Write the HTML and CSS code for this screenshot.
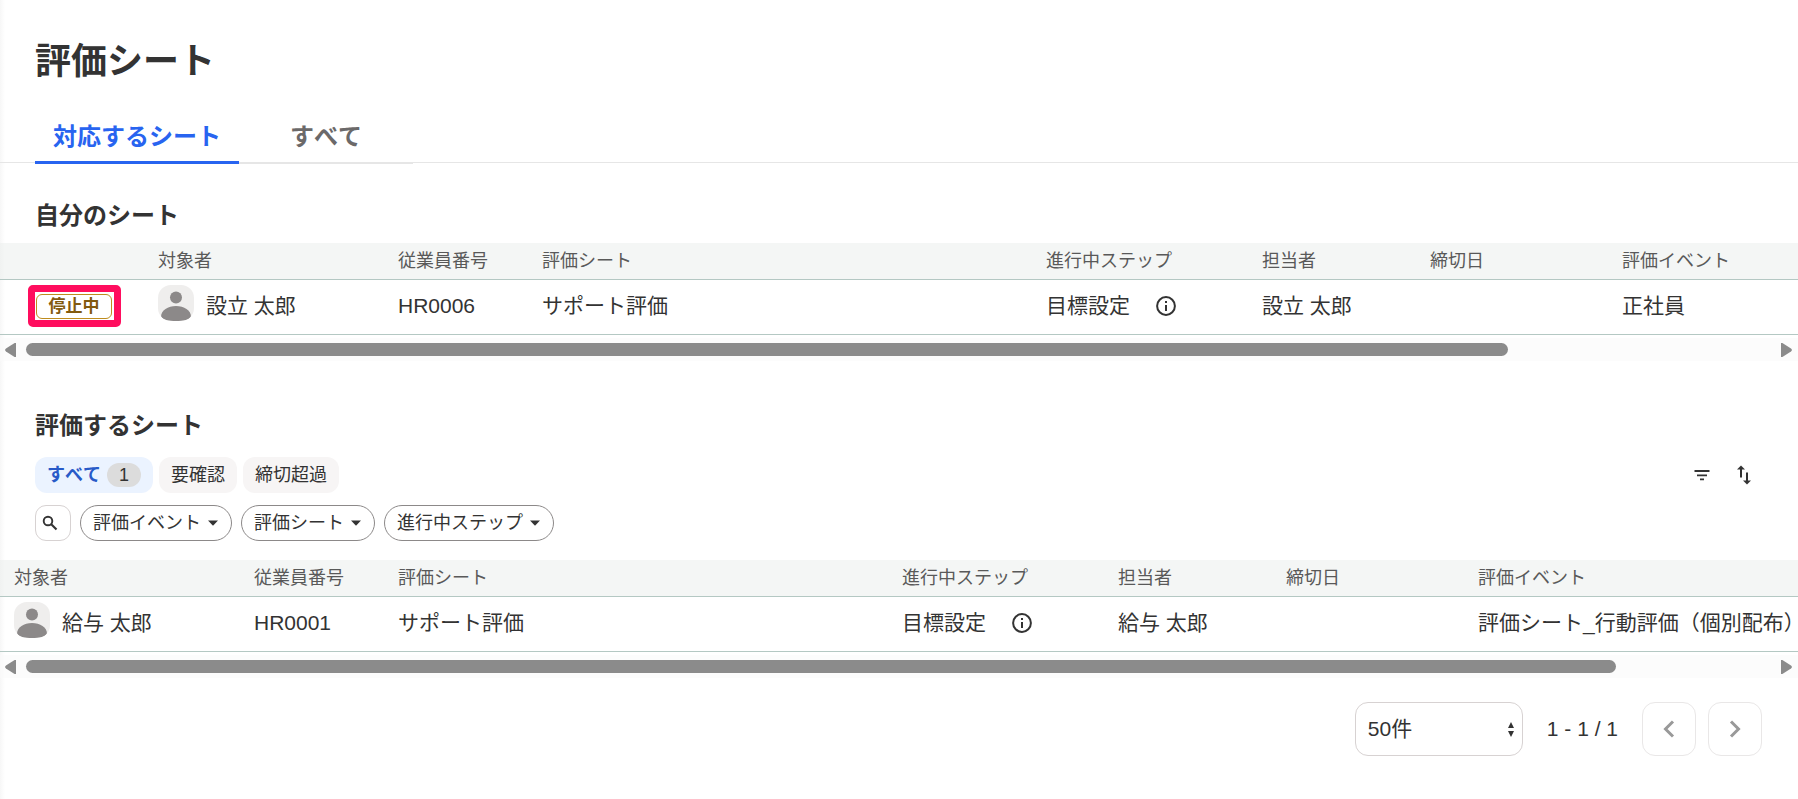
FILE: index.html
```html
<!DOCTYPE html>
<html lang="ja">
<head>
<meta charset="utf-8">
<meta name="viewport" content="width=device-width, initial-scale=1">
<title>評価シート</title>
<link rel="stylesheet" href="styles.css">
</head>
<body>
<svg class="sprite" aria-hidden="true">
  <symbol id="avatar" viewBox="0 0 36 36"><circle cx="18" cy="12.5" r="6"/><path d="M3 32c0-7 7-11 15-11s15 4 15 11c-2 3-8 4-15 4S5 35 3 32z"/></symbol>
  <symbol id="info" viewBox="0 0 20 20"><circle cx="10" cy="10" r="8.9" fill="none" stroke="currentColor" stroke-width="2"/><path d="M9 9h2v6H9zM9 5h2v2H9z"/></symbol>
  <symbol id="caret" viewBox="0 0 10 6"><path d="M0 .5h10L5 5.8z"/></symbol>
  <symbol id="left" viewBox="0 0 11 14"><path d="M9.6 0H11v14H9.600L1 8.500Q-.8 7 1 5.500z"/></symbol>
  <symbol id="right" viewBox="0 0 11 14"><path d="M1.400 0H0v14h1.400L10 8.500Q11.800 7 10 5.500z"/></symbol>
</svg>
<main class="page">
  <h1 class="title">評価シート</h1>
  <nav class="tabs">
    <a class="tab tab-active" href="#mine" aria-current="page">対応するシート</a>
    <a class="tab" href="#all">すべて</a>
  </nav>

  <section class="section" id="mine">
    <h2 class="heading">自分のシート</h2>
    <div class="table-wrap">
      <table class="sheet sheet-status">
        <colgroup><col class="c-status"><col class="c-person"><col class="c-id"><col class="c-sheet"><col class="c-step"><col class="c-owner"><col class="c-due"><col></colgroup>
        <thead><tr><th></th><th>対象者</th><th>従業員番号</th><th>評価シート</th><th>進行中ステップ</th><th>担当者</th><th>締切日</th><th>評価イベント</th></tr></thead>
        <tbody><tr>
          <td class="status-cell"><span class="mark"><span class="status">停止中</span></span></td>
          <td><div class="person"><svg class="avatar"><use href="#avatar"/></svg><span>設立 太郎</span></div></td>
          <td>HR0006</td><td>サポート評価</td>
          <td><div class="step"><span>目標設定</span><button class="info" aria-label="詳細"><svg class="info-icon"><use href="#info"/></svg></button></div></td>
          <td>設立 太郎</td><td></td><td>正社員</td>
        </tr></tbody>
      </table>
    </div>
    <div class="scroll">
      <svg class="arrow"><use href="#left"/></svg>
      <div class="rail"><div class="thumb" style="width:84.9%"></div></div>
      <svg class="arrow"><use href="#right"/></svg>
    </div>
  </section>

  <section class="section section-review">
    <h2 class="heading">評価するシート</h2>
    <div class="toolbar">
      <div class="chips">
        <button class="chip chip-active">すべて<span class="count">1</span></button>
        <button class="chip">要確認</button>
        <button class="chip">締切超過</button>
      </div>
      <div class="tools">
        <button class="tool" aria-label="絞り込み"><svg class="tool-icon" viewBox="0 0 24 24"><path d="M4.500 7h15v2h-15zM7 11.500h10v1.800H7zM10 15.500h4v1.800h-4z"/></svg></button>
        <button class="tool" aria-label="並べ替え"><svg class="tool-icon" viewBox="0 0 24 24"><path d="M8 14.500V6.500H5L9 2.600l4 3.900h-3v8zM14 9.500v8h-3l4 3.900 4-3.900h-3v-8z"/></svg></button>
      </div>
    </div>
    <div class="filters">
      <button class="search" aria-label="検索"><svg class="search-icon" viewBox="0 0 16 16"><circle cx="6" cy="6" r="4.300" fill="none" stroke="currentColor" stroke-width="1.900"/><path d="M9 9l5.500 5.500" fill="none" stroke="currentColor" stroke-width="2.100"/></svg></button>
      <button class="filter">評価イベント<svg class="caret"><use href="#caret"/></svg></button>
      <button class="filter">評価シート<svg class="caret"><use href="#caret"/></svg></button>
      <button class="filter">進行中ステップ<svg class="caret"><use href="#caret"/></svg></button>
    </div>
    <div class="table-wrap">
      <table class="sheet">
        <colgroup><col class="c-person"><col class="c-id"><col class="c-sheet"><col class="c-step"><col class="c-owner"><col class="c-due"><col></colgroup>
        <thead><tr><th>対象者</th><th>従業員番号</th><th>評価シート</th><th>進行中ステップ</th><th>担当者</th><th>締切日</th><th>評価イベント</th></tr></thead>
        <tbody><tr>
          <td><div class="person"><svg class="avatar"><use href="#avatar"/></svg><span>給与 太郎</span></div></td>
          <td>HR0001</td><td>サポート評価</td>
          <td><div class="step"><span>目標設定</span><button class="info" aria-label="詳細"><svg class="info-icon"><use href="#info"/></svg></button></div></td>
          <td>給与 太郎</td><td></td><td>評価シート_行動評価（個別配布）</td>
        </tr></tbody>
      </table>
    </div>
    <div class="scroll">
      <svg class="arrow"><use href="#left"/></svg>
      <div class="rail"><div class="thumb" style="width:91.1%"></div></div>
      <svg class="arrow"><use href="#right"/></svg>
    </div>
  </section>

  <footer class="pager">
    <div class="select-box">
      <select class="select" aria-label="表示件数"><option>50件</option></select>
      <svg class="select-icon" viewBox="0 0 6 15"><path d="M0 6l3-6 3 6zM0 9h6l-3 6z"/></svg>
    </div>
    <span class="range">1 - 1 / 1</span>
    <div class="pages">
      <button class="page-btn" aria-label="前へ"><svg class="chevron" viewBox="0 0 12 18"><path d="M10 1.500L2.500 9l7.500 7.500"/></svg></button>
      <button class="page-btn" aria-label="次へ"><svg class="chevron" viewBox="0 0 12 18"><path d="M2 1.500L9.500 9 2 16.500"/></svg></button>
    </div>
  </footer>
</main>
</body>
</html>
```
FILE: styles.css
```css
* { box-sizing: border-box; }

body {
  margin: 0;
  background: #fff;
  color: #333;
  font-family: "Liberation Sans", "Noto Sans CJK JP", sans-serif;
  font-size: 21px;
  line-height: 30px;
  font-kerning: none;
}

button, select { font: inherit; font-kerning: none; color: inherit; }
button { padding: 0; border: 0; background: none; cursor: pointer; }
svg { display: block; flex: none; fill: currentColor; }
.sprite { position: absolute; width: 0; height: 0; }

.page {
  min-height: 100vh;
  padding-top: 38px;
  overflow: hidden;
  background: linear-gradient(to right, #f7f7f7, #fff 5px);
}

.title {
  margin: 0 35px;
  font-size: 36px;
  line-height: 48px;
  font-weight: 700;
}

.tabs {
  display: flex;
  height: 64px;
  margin-top: 14px;
  padding-left: 35px;
  background: linear-gradient(#e6e6e6, #e6e6e6) 0 62px / 100% 1px no-repeat;
}

.tab {
  padding: 21px 51px 0;
  border-bottom: 2px solid #e6e6e6;
  color: #6b6969;
  font-size: 24px;
  line-height: 32px;
  font-weight: 700;
  text-decoration: none;
}

.tab-active {
  padding: 21px 18px 0;
  border-bottom: 3px solid #2864f0;
  color: #2864f0;
}

.section { padding-top: 36px; }
.section-review { padding-top: 49px; }

.heading {
  margin: 0 35px 11px;
  font-size: 24px;
  line-height: 32px;
  font-weight: 700;
}

.table-wrap { overflow-x: auto; scrollbar-width: none; }

.sheet {
  width: 1980px;
  min-width: 110%;
  table-layout: fixed;
  border-collapse: separate;
  border-spacing: 0;
}

.sheet-status { width: 2124px; }

.c-status { width: 144px; }
.c-person { width: 240px; }
.c-id { width: 144px; }
.c-sheet { width: 504px; }
.c-step { width: 216px; }
.c-owner { width: 168px; }
.c-due { width: 192px; }

.sheet th, .sheet td {
  border-bottom: 1px solid #b4c8c3;
  padding: 0 14px;
  text-align: left;
  white-space: nowrap;
}

.sheet th {
  height: 37px;
  background: rgba(233, 238, 236, 0.5);
  color: #595959;
  font-size: 18px;
  line-height: 24px;
  font-weight: 400;
}

.sheet td { height: 55px; padding-bottom: 2px; }
.sheet .status-cell { padding: 0 0 2px 28px; }

.mark {
  display: block;
  width: 93px;
  padding: 2px 2px 1px 1px;
  border: 7px solid #ff0d5e;
  border-radius: 5px;
}

.status {
  display: block;
  border: 1px solid #be8c1e;
  border-radius: 6px;
  color: #825a0f;
  font-size: 17px;
  line-height: 23px;
  font-weight: 700;
  text-align: center;
}

.person { display: flex; align-items: center; gap: 12px; }

.avatar {
  width: 36px;
  height: 36px;
  margin-bottom: 6px;
  border-radius: 13px;
  background: #efeeed;
  color: #8c8989;
}

.step { display: flex; align-items: center; gap: 26px; }
.info-icon { width: 20px; height: 20px; }

.scroll {
  display: flex;
  align-items: center;
  height: 23px;
  margin-top: 3px;
  padding: 0 6px 0 5px;
  gap: 10px;
  background: rgba(250, 250, 250, 0.6);
  color: #8b8b8b;
}

.arrow { width: 11px; height: 14px; }
.rail { flex: 1; }
.thumb { height: 13px; border-radius: 7px; background: #8b8b8b; }

.toolbar {
  display: flex;
  justify-content: space-between;
  align-items: center;
  padding: 4px 42px 0 35px;
}

.chips { display: flex; gap: 6px; font-size: 18px; line-height: 24px; }

.chip {
  display: flex;
  align-items: center;
  gap: 6px;
  height: 36px;
  padding: 0 12px;
  border-radius: 12px;
  background: #f7f5f5;
}

.chip-active { background: #ebf3ff; color: #285ac8; font-weight: 700; }

.count {
  width: 34px;
  border-radius: 12px;
  background: #dcdcdc;
  color: #333;
  font-weight: 400;
}

.tools { display: flex; gap: 18px; }
.tool-icon { width: 24px; height: 24px; }

.filters {
  display: flex;
  gap: 9px;
  padding: 12px 35px 19px;
  font-size: 18px;
  line-height: 24px;
}

.search, .filter {
  display: flex;
  align-items: center;
  height: 36px;
  border: 1px solid #8c8989;
  border-radius: 18px;
}

.search {
  width: 36px;
  padding-left: 6px;
  border-color: #d7d2d2;
  border-radius: 11px;
}

.search-icon { width: 16px; height: 16px; }
.filter { gap: 7px; padding: 0 13px 0 12px; }
.caret { width: 10px; height: 6px; }

.pager {
  display: flex;
  justify-content: flex-end;
  align-items: center;
  gap: 24px;
  padding: 24px 36px 40px;
}

.select-box { position: relative; width: 168px; }

.select {
  appearance: none;
  width: 100%;
  height: 54px;
  padding: 0 12px;
  border: 1px solid #d7d2d2;
  border-radius: 13px;
  background: #fff;
}

.select-icon {
  position: absolute;
  top: 20px;
  right: 9px;
  width: 6px;
  height: 15px;
  pointer-events: none;
}

.pages { display: flex; gap: 12px; }

.page-btn {
  display: flex;
  align-items: center;
  justify-content: center;
  width: 54px;
  height: 54px;
  border: 1px solid #e9e7e7;
  border-radius: 13px;
  color: #999;
}

.chevron {
  width: 12px;
  height: 18px;
  fill: none;
  stroke: currentColor;
  stroke-width: 3;
}
```
